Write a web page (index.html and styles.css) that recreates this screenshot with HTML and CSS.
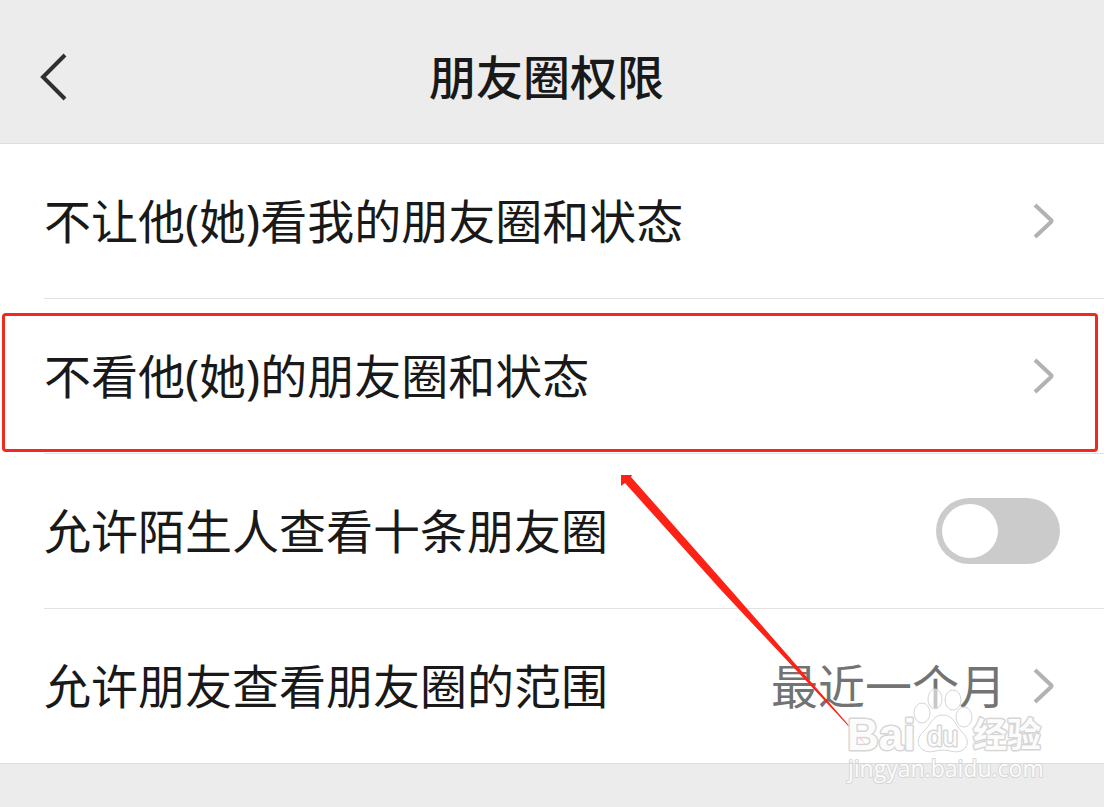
FILE: index.html
```html
<!DOCTYPE html>
<html lang="zh-CN">
<head>
    <meta charset="UTF-8">
    <meta name="viewport" content="width=device-width, initial-scale=1.0">
    <title>朋友圈权限</title>
    <link rel="stylesheet" href="styles.css">
</head>

<body>
    <div class="page">

        <header class="topbar">
            <button type="button" class="back" aria-label="返回">
                <svg width="28" height="48" viewBox="0 0 28 48"><path d="M26 2 L4 24 L26 46"/></svg>
            </button>
            <h1>朋友圈权限</h1>
        </header>

        <main>
            <ul class="settings">
                <li>
                    <button type="button" class="row">
                        <span class="name">不让他(她)看我的朋友圈和状态</span>
                        <svg class="chevron" width="22" height="36" viewBox="0 0 22 36"><path d="M2 2 L18 17 Q19 18 18 19 L2 34"/></svg>
                    </button>
                </li>
                <li class="marked">
                    <button type="button" class="row">
                        <span class="name">不看他(她)的朋友圈和状态</span>
                        <svg class="chevron" width="22" height="36" viewBox="0 0 22 36"><path d="M2 2 L18 17 Q19 18 18 19 L2 34"/></svg>
                    </button>
                </li>
                <li>
                    <div class="row">
                        <label class="name" for="strangers">允许陌生人查看十条朋友圈</label>
                        <input type="checkbox" id="strangers" class="switch" role="switch">
                    </div>
                </li>
                <li>
                    <button type="button" class="row">
                        <span class="name">允许朋友查看朋友圈的范围</span>
                        <span class="value">最近一个月</span>
                        <svg class="chevron" width="22" height="36" viewBox="0 0 22 36"><path d="M2 2 L18 17 Q19 18 18 19 L2 34"/></svg>
                    </button>
                </li>
            </ul>
        </main>

        <!-- red pointer to the marked row -->
        <svg class="arrow" width="254" height="280" viewBox="0 0 254 280">
            <path d="M1 1 L12 1 L11 3 L109 114 L247 272 L101 116 L5 9 L1 12 Z"/>
        </svg>

        <!-- watermark -->
        <svg class="watermark" width="204" height="106" viewBox="0 0 204 106">
            <ellipse cx="77" cy="31" rx="8" ry="10"/>
            <ellipse cx="90" cy="17" rx="7" ry="10"/>
            <ellipse cx="108" cy="18" rx="8" ry="10"/>
            <ellipse cx="119" cy="35" rx="8" ry="10"/>
            <path d="M98 33 C87 33 86 43 79 49 C72 55 71 63 78 68 C85 72 91 68 98 68 C105 68 111 72 118 68 C125 63 123 55 116 49 C110 43 109 33 98 33 Z"/>
            <text class="bai" x="2" y="68">Bai</text>
            <text class="du" x="82" y="64">du</text>
            <text class="jy" x="128" y="65">经验</text>
            <text class="site" x="3" y="95">jingyan.baidu.com</text>
        </svg>

    </div>
</body>
</html>
```

FILE: styles.css
```css
* {
    box-sizing: border-box;
}
body {
    margin: 0;
    background-color: #ececec;
    color: #191919;
    font-family: "Noto Sans", "Noto Sans CJK SC", sans-serif;
    font-size: 47px;
    line-height: 70px;
}
.page {
    position: relative;
    min-height: 100vh;
    overflow: hidden;
}
button {
    margin: 0;
    padding: 0;
    border: none;
    background: none;
    color: inherit;
    font: inherit;
    text-align: left;
    cursor: pointer;
}
svg {
    display: block;
    fill: none;
}

/* top bar */
.topbar {
    display: grid;
    grid-template-columns: 28px 1fr 28px;
    align-items: center;
    padding: 42px 50px 31px 39px;
    border-bottom: 1px solid #dedede;
}
.topbar h1 {
    margin: 0;
    font-size: 47px;
    font-weight: 500;
    text-align: center;
}
.back path {
    stroke: #303030;
    stroke-width: 4;
}

/* list */
.settings {
    list-style: none;
    margin: 0;
    padding: 0;
    background-color: #fff;
    border-bottom: 1px solid #dedede;
}
.settings li {
    position: relative;
    padding-left: 44px;
}
.row {
    display: flex;
    align-items: center;
    gap: 27px;
    width: 100%;
    min-height: 155px;
    padding-right: 49px;
    border-bottom: 1px solid #e2e2e2;
}
.settings li:last-child .row {
    min-height: 154px;
    border-bottom: none;
}
.name {
    flex: 1;
}
.value {
    color: #737373;
}
.chevron path {
    stroke: #b2b2b2;
    stroke-width: 4;
}
.marked::after {
    content: "";
    position: absolute;
    inset: 14px 6px 2px 2px;
    border: 3px solid #f0291f;
    border-radius: 4px;
    pointer-events: none;
}

/* switch */
.switch {
    appearance: none;
    display: flex;
    align-items: center;
    width: 124px;
    height: 66px;
    margin: 0 -5px 0 0;
    padding: 0 6px;
    border-radius: 33px;
    background-color: #cbcbcb;
    cursor: pointer;
}
.switch::before {
    content: "";
    width: 56px;
    height: 54px;
    border-radius: 50%;
    background-color: #fff;
}
.switch:checked {
    justify-content: flex-end;
    background-color: #07c160;
}

/* things lying over the list */
.arrow {
    position: absolute;
    top: 474px;
    right: 230px;
    fill: #fc2216;
    pointer-events: none;
}
.watermark {
    position: absolute;
    top: 682px;
    right: 55px;
    fill: rgba(255, 255, 255, 0.6);
    stroke: #d6d6d6;
    stroke-width: 1;
    pointer-events: none;
}
.watermark text {
    fill: #fcfcfc;
    stroke-width: 3;
    stroke-linejoin: round;
    paint-order: stroke;
}
.watermark .bai {
    font-family: "Liberation Sans", sans-serif;
    font-size: 44px;
    font-weight: bold;
}
.watermark .du {
    font-family: "Liberation Sans", sans-serif;
    font-size: 28px;
}
.watermark .jy {
    font-size: 34px;
    font-weight: bold;
}
.watermark .site {
    font-family: "Open Sans", sans-serif;
    font-size: 23px;
    stroke-width: 2;
}
```
